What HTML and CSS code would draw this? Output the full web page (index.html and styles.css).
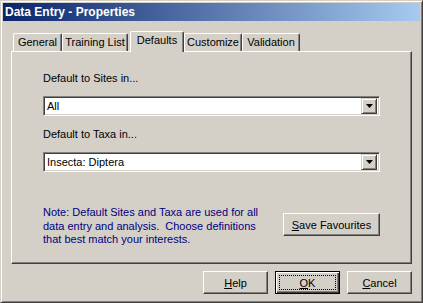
FILE: index.html
```html
<!DOCTYPE html>
<html>
<head>
    <title>Data Entry - Properties</title>
    <link rel="stylesheet" href="styles.css">
</head>
<body>
    <div class="window">
        <div class="titlebar">Data Entry - Properties</div>
        <div class="content">
            <div class="tabs">
                <div class="tab tab-general">General</div>
                <div class="tab tab-training">Training List</div>
                <div class="tab tab-active">Defaults</div>
                <div class="tab tab-customize">Customize</div>
                <div class="tab tab-validation">Validation</div>
            </div>
            <div class="panel">
                <div class="label">Default to Sites in...</div>
                <div class="combo">
                    <span class="combo-value">All</span>
                    <span class="combo-btn">
                        <svg width="7" height="4" viewBox="0 0 7 4"><path d="M0 0h7L3.5 4z" fill="#000"/></svg>
                    </span>
                </div>
                <div class="label label-second">Default to Taxa in...</div>
                <div class="combo">
                    <span class="combo-value">Insecta: Diptera</span>
                    <span class="combo-btn">
                        <svg width="7" height="4" viewBox="0 0 7 4"><path d="M0 0h7L3.5 4z" fill="#000"/></svg>
                    </span>
                </div>
                <div class="note-row">
                    <p class="note">Note: Default Sites and Taxa are used for all<br>data entry and analysis.&nbsp; Choose definitions<br>that best match your interests.</p>
                    <button class="btn btn-save" type="button"><u>S</u>ave Favourites</button>
                </div>
            </div>
            <div class="actions">
                <button class="btn" type="button"><u>H</u>elp</button>
                <button class="btn btn-default" type="button"><u>O</u>K</button>
                <button class="btn" type="button"><u>C</u>ancel</button>
            </div>
        </div>
    </div>
</body>
</html>
```

FILE: styles.css
```css
* {
    box-sizing: border-box;
}

body {
    margin: 0;
    font-family: "Liberation Sans", Arial, sans-serif;
    font-size: 11px;
    color: #000;
    background-color: #d4d0c8;
}

.window {
    width: 423px;
    height: 303px;
    padding: 2px;
    background-color: #d4d0c8;
    border: 1px solid;
    border-color: #d4d0c8 #404040 #404040 #d4d0c8;
    box-shadow: inset 1px 1px #fff, inset -1px -1px #808080;
    display: flex;
    flex-direction: column;
}

.titlebar {
    height: 18px;
    line-height: 18px;
    padding-left: 2px;
    color: #fff;
    font-weight: bold;
    font-size: 12px;
    background: linear-gradient(to right, #0a246a, #a6caf0);
}

.content {
    flex: 1;
    padding: 10px 8px 0 8px;
    display: flex;
    flex-direction: column;
}

/* tabs */
.tabs {
    height: 20px;
    padding-left: 2px;
    display: flex;
    align-items: flex-end;
}

.tab {
    height: 18px;
    line-height: 16px;
    text-align: center;
    background-color: #d4d0c8;
    border-top: 1px solid #fff;
    border-left: 1px solid #fff;
    border-right: 1px solid #404040;
    border-radius: 2px 2px 0 0;
    box-shadow: inset -1px 0 #808080;
}

.tab-general { width: 49px; }
.tab-training { width: 66px; }
.tab-customize { width: 58px; }
.tab-validation { width: 58px; }

.tab-active {
    width: 54px;
    height: 21px;
    margin-left: 2px;
    margin-bottom: -1px;
    line-height: 17px;
    position: relative;
    z-index: 1;
}

/* panel */
.panel {
    height: 213px;
    padding: 20px 31px 0 31px;
    border: 1px solid;
    border-color: #fff #404040 #404040 #fff;
    box-shadow: inset -1px -1px #808080;
}

.label {
    line-height: 13px;
}

.label-second {
    margin-top: 12px;
}

.combo {
    height: 20px;
    margin-top: 11px;
    background-color: #fff;
    border: 1px solid;
    border-color: #808080 #fff #fff #808080;
    box-shadow: inset 1px 1px #404040, inset -1px -1px #d4d0c8;
    padding: 2px;
    display: flex;
    align-items: center;
}

.combo-value {
    flex: 1;
    padding-left: 1px;
    line-height: 14px;
}

.combo-btn {
    width: 16px;
    height: 16px;
    background-color: #d4d0c8;
    border: 1px solid;
    border-color: #d4d0c8 #404040 #404040 #d4d0c8;
    box-shadow: inset 1px 1px #fff, inset -1px -1px #808080;
    display: flex;
    align-items: center;
    justify-content: center;
}

.note-row {
    margin-top: 34px;
    display: flex;
    justify-content: space-between;
    align-items: flex-start;
}

.note {
    margin: 0;
    color: #000080;
    line-height: 13.5px;
}

/* buttons */
.btn {
    width: 65px;
    height: 23px;
    padding: 0;
    font-family: "Liberation Sans", Arial, sans-serif;
    font-size: 11px;
    color: #000;
    background-color: #d4d0c8;
    border: 1px solid;
    border-color: #fff #404040 #404040 #fff;
    box-shadow: inset -1px -1px #808080;
    cursor: pointer;
}

.btn-save {
    width: 97px;
    margin-top: 7px;
}

.btn-default {
    border-color: #000;
    box-shadow: inset 1px 1px #fff, inset -1px -1px #404040, inset -2px -2px #808080;
    outline: 1px dotted #000;
    outline-offset: -5px;
}

.actions {
    margin-top: 7px;
    display: flex;
    justify-content: flex-end;
    gap: 7px;
}
```
